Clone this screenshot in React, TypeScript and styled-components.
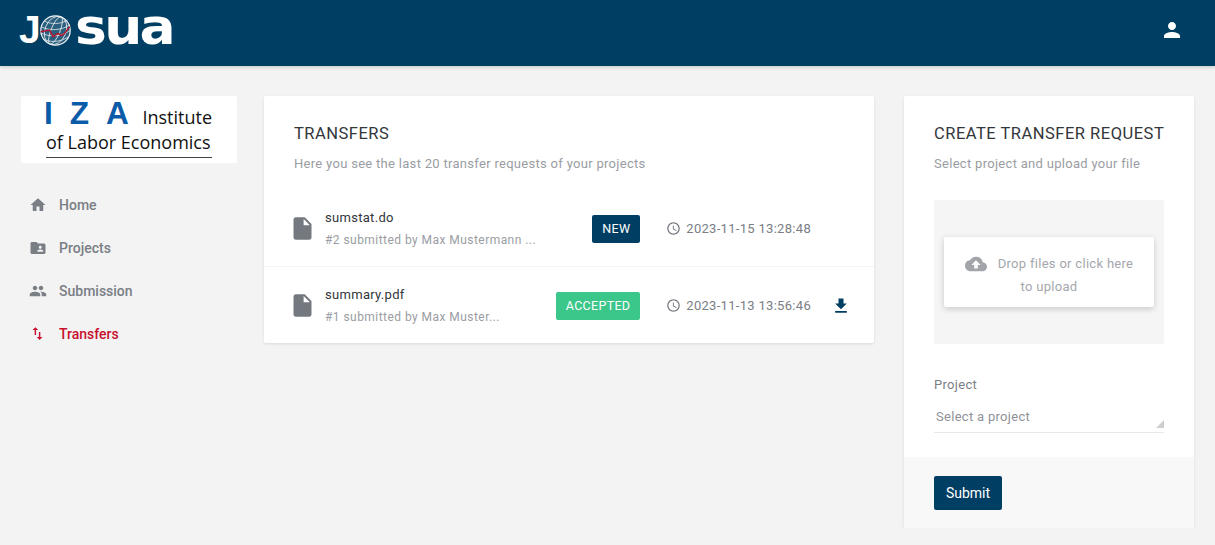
import styled, { createGlobalStyle } from "styled-components"
import {
  MdAccessTime,
  MdCloudUpload,
  MdFileDownload,
  MdFolderShared,
  MdHome,
  MdInsertDriveFile,
  MdPeople,
  MdPerson,
  MdSwapVert,
} from "react-icons/md"
import type { ReactNode } from "react"

const GlobalStyle = createGlobalStyle`
  * { box-sizing: border-box; }
  html, body { margin: 0; padding: 0; }
  body {
    background: #f3f3f3;
    font-family: Roboto, "Liberation Sans", sans-serif;
    font-size: 13px;
  }
`

const navItems: { label: string; icon: ReactNode; active?: boolean }[] = [
  { label: "Home", icon: <MdHome size={18} /> },
  { label: "Projects", icon: <MdFolderShared size={18} /> },
  { label: "Submission", icon: <MdPeople size={18} /> },
  { label: "Transfers", icon: <MdSwapVert size={17} />, active: true },
]

const transfers = [
  {
    name: "sumstat.do",
    meta: "#2 submitted by Max Mustermann ...",
    status: "NEW",
    time: "2023-11-15 13:28:48",
    download: false,
  },
  {
    name: "summary.pdf",
    meta: "#1 submitted by Max Muster...",
    status: "ACCEPTED",
    time: "2023-11-13 13:56:46",
    download: true,
  },
]

function Globe() {
  return (
    <svg width="31" height="31" viewBox="0 0 31 31">
      <circle cx="15.5" cy="15.5" r="14.7" fill="#2a5f7e" stroke="#eef1f3" strokeWidth="1.2" />
      <g fill="none" stroke="#e6ebee" strokeWidth="0.8">
        <g transform="rotate(22 15.5 15.5)">
          <ellipse cx="15.5" cy="15.5" rx="4.5" ry="14.7" />
          <ellipse cx="15.5" cy="15.5" rx="10.5" ry="14.7" />
        </g>
        <path d="M4.5 6c6 3.5 16 3.5 23-1M1.5 12c8 4 20 3.5 28-2M1 18c8 4 20 4 29-2.5M3 24c7 3.5 17 3.5 25-2" />
      </g>
      <path
        d="M0.7 16.7L9.7 15L13 21.7L18 18.3L21.3 20.7L24.7 18.3L29.7 11.7"
        fill="none"
        stroke="#b5152f"
        strokeWidth="1.5"
      />
    </svg>
  )
}

export default function App() {
  return (
    <>
      <GlobalStyle />
      <Header>
        <Logo>
          <LogoJ>J</LogoJ>
          <Globe />
          <LogoRest>sua</LogoRest>
        </Logo>
        <UserIcon>
          <MdPerson size={24} color="#fff" />
        </UserIcon>
      </Header>
      <Main>
        <aside>
          <IzaBox>
            <IzaTop>
              <IzaLetters>IZA</IzaLetters>
              <IzaInstitute>Institute</IzaInstitute>
            </IzaTop>
            <IzaBottom>of Labor Economics</IzaBottom>
          </IzaBox>
          <Nav>
            {navItems.map((item) => (
              <NavItem key={item.label} $active={item.active}>
                <NavIcon>{item.icon}</NavIcon>
                {item.label}
              </NavItem>
            ))}
          </Nav>
        </aside>

        <ListCard>
          <CardHead>
            <Title>TRANSFERS</Title>
            <Subtitle>Here you see the last 20 transfer requests of your projects</Subtitle>
          </CardHead>
          {transfers.map((t) => (
            <Row key={t.name}>
              <MdInsertDriveFile size={27} color="#74787f" />
              <RowText>
                <FileName>{t.name}</FileName>
                <Meta>{t.meta}</Meta>
              </RowText>
              <Status $accepted={t.status === "ACCEPTED"}>{t.status}</Status>
              <Time>
                <MdAccessTime size={15} color="#74787f" />
                {t.time}
              </Time>
              <DownloadSlot>{t.download && <MdFileDownload size={20} color="#003f63" />}</DownloadSlot>
            </Row>
          ))}
        </ListCard>

        <FormCard>
          <FormBody>
            <Title>CREATE TRANSFER REQUEST</Title>
            <Subtitle>Select project and upload your file</Subtitle>
            <DropArea>
              <DropCard>
                <DropLine>
                  <MdCloudUpload size={22} color="#a1a4a9" />
                  Drop files or click here
                </DropLine>
                <div>to upload</div>
              </DropCard>
            </DropArea>
            <FieldLabel>Project</FieldLabel>
            <Select>Select a project</Select>
          </FormBody>
          <FormFooter>
            <Submit>Submit</Submit>
          </FormFooter>
        </FormCard>
      </Main>
    </>
  )
}

const Header = styled.header`
  height: 66px;
  background: #003f63;
  box-shadow: 0 1px 4px rgba(0, 0, 0, 0.2);
  display: flex;
  align-items: center;
  justify-content: space-between;
  padding: 0 31px 0 21px;
`

const UserIcon = styled.span`
  display: flex;
  margin-top: -7px;
`

const Logo = styled.div`
  display: flex;
  align-items: center;
  color: #fff;
  font-weight: 700;
  height: 30px;
  margin-top: -6px;
`

const LogoJ = styled.span`
  font-family: "Liberation Sans", sans-serif;
  font-size: 39px;
  line-height: 30px;
  width: 21px;
  margin-left: -2px;
  display: block;
`

const LogoRest = styled.span`
  font-family: "DejaVu Sans", sans-serif;
  font-size: 50px;
  line-height: 30px;
  margin-left: 4px;
  margin-top: -6px;
  letter-spacing: -2.5px;
  display: block;
  transform: scaleX(1.07);
  transform-origin: left;
`

const Main = styled.main`
  display: grid;
  grid-template-columns: 216px 637px 320px;
  align-items: start;
  padding: 30px 21px 0;
`

const IzaBox = styled.div`
  height: 67px;
  background: #fff;
  border-radius: 2px;
  padding: 0 25px;
  font-family: "Open Sans", sans-serif;
  color: #111;
  overflow: hidden;
`

const IzaTop = styled.div`
  display: flex;
  align-items: flex-end;
  justify-content: space-between;
  height: 32px;
`

const IzaLetters = styled.span`
  font-family: "Liberation Sans", sans-serif;
  font-size: 31.6px;
  line-height: 30px;
  font-weight: 700;
  color: #0a5ca8;
  letter-spacing: 17px;
  margin-left: -2px;
  margin-right: -17px;
  white-space: nowrap;
`

const IzaInstitute = styled.span`
  font-size: 18px;
  line-height: 26px;
  margin-bottom: -2px;
`

const IzaBottom = styled.div`
  font-size: 18px;
  line-height: 29px;
  border-bottom: 1.5px solid #444;
  white-space: nowrap;
`

const Nav = styled.nav`
  margin-top: 20px;
  display: flex;
  flex-direction: column;
`

const NavItem = styled.a<{ $active?: boolean }>`
  height: 43px;
  display: flex;
  align-items: center;
  font-size: 14px;
  font-weight: 500;
  color: ${(p) => (p.$active ? "#c8102e" : "#7a7e85")};
`

const NavIcon = styled.span`
  width: 38px;
  padding-left: 8px;
  display: flex;
  align-items: center;
`

const ListCard = styled.section`
  margin-left: 27px;
  background: #fff;
  border-radius: 2px;
  box-shadow: 0 1px 3px rgba(0, 0, 0, 0.1);
`

const CardHead = styled.div`
  padding: 28px 30px 18px;
`

const Title = styled.h2`
  margin: 0;
  font-size: 16.5px;
  line-height: 19px;
  font-weight: 400;
  color: #33363a;
  letter-spacing: 0.5px;
  white-space: nowrap;
`

const Subtitle = styled.p`
  margin: 13px 0 0;
  font-size: 13px;
  line-height: 16px;
  color: #9a9da3;
  letter-spacing: 0.3px;
`

const Row = styled.div`
  height: 77px;
  display: flex;
  align-items: center;
  padding: 1px 23px 0 25px;
  border-bottom: 1px solid #f3f3f3;

  &:last-child {
    height: 76px;
    border-bottom: none;
  }
`

const RowText = styled.div`
  flex: 1;
  margin-left: 9px;
`

const FileName = styled.div`
  font-size: 13px;
  line-height: 16px;
  color: #33363a;
  letter-spacing: 0.3px;
`

const Meta = styled.div`
  margin-top: 7px;
  font-size: 12px;
  line-height: 15px;
  color: #9a9da3;
  letter-spacing: 0.45px;
`

const Status = styled.span<{ $accepted: boolean }>`
  height: 28px;
  padding: 0 10px;
  display: flex;
  align-items: center;
  border-radius: 2px;
  font-size: 12.5px;
  letter-spacing: 0.3px;
  color: #fff;
  background: ${(p) => (p.$accepted ? "#3bc68a" : "#003f63")};
`

const Time = styled.div`
  margin-left: 26px;
  display: flex;
  align-items: center;
  gap: 5px;
  font-size: 13px;
  color: #7a7e85;
  letter-spacing: 0.3px;
`

const DownloadSlot = styled.div`
  width: 40px;
  display: flex;
  justify-content: flex-end;
`

const FormCard = styled.section`
  margin-left: 30px;
  background: #fff;
  border-radius: 2px;
  box-shadow: 0 1px 3px rgba(0, 0, 0, 0.1);
`

const FormBody = styled.div`
  padding: 28px 30px 24px;
`

const DropArea = styled.div`
  margin-top: 28px;
  height: 144px;
  background: #f5f5f5;
  border-radius: 2px;
  display: flex;
  align-items: center;
  justify-content: center;
`

const DropCard = styled.div`
  width: 210px;
  height: 70px;
  background: #fff;
  border-radius: 2px;
  box-shadow: 0 2px 6px rgba(0, 0, 0, 0.18);
  color: #a4a7ac;
  font-size: 13px;
  line-height: 23px;
  letter-spacing: 0.3px;
  text-align: center;
  padding-top: 15px;
`

const DropLine = styled.div`
  display: flex;
  align-items: center;
  justify-content: center;
  gap: 11px;
`

const FieldLabel = styled.label`
  display: block;
  margin-top: 33px;
  font-size: 13px;
  line-height: 16px;
  color: #7a7e85;
  letter-spacing: 0.3px;
`

const Select = styled.div`
  position: relative;
  margin-top: 8px;
  height: 32px;
  padding: 8px 2px 0;
  border-bottom: 1px solid #e8e8e8;
  font-size: 13px;
  line-height: 16px;
  color: #8f9298;
  letter-spacing: 0.3px;

  &::after {
    content: "";
    position: absolute;
    right: 0;
    bottom: 4px;
    border-style: solid;
    border-width: 0 0 8px 8px;
    border-color: transparent transparent #cfcfcf transparent;
  }
`

const FormFooter = styled.div`
  height: 71px;
  background: #f8f8f8;
  padding: 19px 30px 0;
`

const Submit = styled.button`
  width: 68px;
  height: 34px;
  border: none;
  border-radius: 2px;
  background: #003f63;
  color: #fff;
  font-family: inherit;
  font-size: 14px;
  padding: 0;
`
